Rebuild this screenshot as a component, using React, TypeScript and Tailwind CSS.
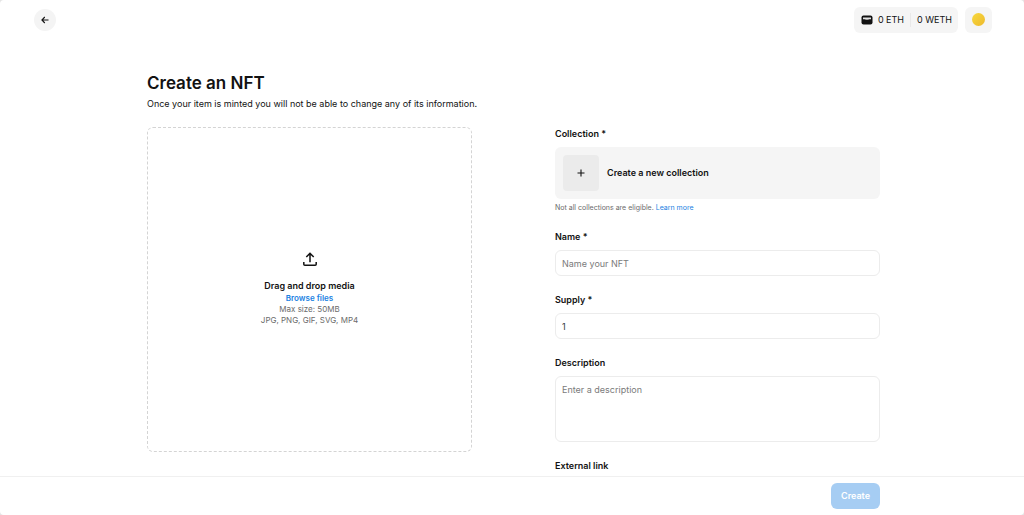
import React from "react";

interface FieldProps {
  id: string;
  label: string;
  children: React.ReactNode;
}

const inputStyles =
  "block w-full rounded-md border border-[#ececec] bg-white px-1.5 text-[9px] leading-[14px] text-[#353840] outline-none placeholder:text-[#7b7b7b] placeholder:opacity-100 focus:border-[#2081e2]";

const Field: React.FC<FieldProps> = ({ id, label, children }) => (
  <div className="flex flex-col gap-1.5">
    <label htmlFor={id} className="text-[9px] leading-[14px] font-semibold">
      {label}
    </label>
    {children}
  </div>
);

const ArrowLeftIcon = () => (
  <svg
    viewBox="0 0 10 10"
    className="size-[10px]"
    fill="none"
    stroke="currentColor"
    strokeWidth="1.1"
  >
    <path d="M8.500 5H2M4.800 2 1.900 5l2.900 3" />
  </svg>
);

const WalletIcon = () => (
  <svg viewBox="0 0 12 10" className="h-[10px] w-3">
    <rect x="0.5" y="0.5" width="11" height="9" rx="2" fill="#121212" />
    <path
      d="M2 2.200h8v2H8.300c-.6 0-.8.800-2.300.800s-1.700-.8-2.300-.8H2z"
      fill="#9a9a9a"
    />
    <path d="M2 3.600h8" stroke="#f5f5f5" strokeWidth="0.9" />
  </svg>
);

const UploadIcon = () => (
  <svg
    viewBox="0 0 14 14"
    className="size-[14px]"
    fill="none"
    stroke="currentColor"
    strokeWidth="1.5"
  >
    <path d="M7 10.200V1.300M3.300 5 7 1.300 10.700 5" />
    <path d="M.8 10v2.200c0 .6.400 1 1 1h10.400c.6 0 1-.4 1-1V10" />
  </svg>
);

const PlusIcon = () => (
  <svg
    viewBox="0 0 8 8"
    className="size-2"
    stroke="currentColor"
    strokeWidth="1.1"
  >
    <path d="M4 .5v7M.5 4h7" />
  </svg>
);

const Header = () => (
  <header className="flex h-[39px] shrink-0 items-center justify-between pr-8 pl-[34px]">
    <button
      type="button"
      aria-label="Back"
      className="flex size-[22px] items-center justify-center rounded-full bg-[#f4f4f4]"
    >
      <ArrowLeftIcon />
    </button>
    <div className="flex gap-[7px]">
      <button
        type="button"
        className="flex h-[26px] items-center rounded-md bg-[#f5f5f5] pr-1.5 pl-[7px] text-[9px]"
      >
        <WalletIcon />
        <span className="ml-[5px]">0 ETH</span>
        <span className="mx-1.5 h-[14px] w-px bg-[#e9e9e9]" />
        <span>0 WETH</span>
      </button>
      <button
        type="button"
        aria-label="Account"
        className="flex h-[26px] w-[27px] items-center justify-center rounded-md bg-[#f5f5f5]"
      >
        <span className="size-[13px] rounded-full bg-linear-to-br from-[#f7d93c] to-[#edb92e]" />
      </button>
    </div>
  </header>
);

const MediaUpload = () => (
  <button
    type="button"
    className="flex aspect-square w-full flex-col items-center justify-center rounded-md border border-dashed border-[#d4d4d4] pb-0.5"
  >
    <UploadIcon />
    <span className="mt-[13px] text-[9px] leading-[14px] font-semibold">
      Drag and drop media
    </span>
    <span className="text-[8px] leading-[11px] font-semibold text-[#2081e2]">
      Browse files
    </span>
    <span className="text-[8px] leading-[11px] text-[#6b6b6b]">
      Max size: 50MB
    </span>
    <span className="text-[8px] leading-[11px] text-[#6b6b6b]">
      JPG, PNG, GIF, SVG, MP4
    </span>
  </button>
);

const CreateForm = () => (
  <form id="create-nft" className="flex flex-col gap-[17px] pb-12">
    <div>
      <Field id="collection" label="Collection *">
        <button
          id="collection"
          type="button"
          className="flex w-full items-center gap-2 rounded-md bg-[#f5f5f5] p-2 text-[9px] font-semibold"
        >
          <span className="flex size-9 items-center justify-center rounded bg-[#ebebeb]">
            <PlusIcon />
          </span>
          Create a new collection
        </button>
      </Field>
      <p className="mt-1 text-[7px] leading-[10px] text-[#6b6b6b]">
        Not all collections are eligible.{" "}
        <a href="#learn-more" className="text-[#2081e2]">
          Learn more
        </a>
      </p>
    </div>
    <Field id="name" label="Name *">
      <input
        id="name"
        type="text"
        placeholder="Name your NFT"
        className={`${inputStyles} h-[26px]`}
      />
    </Field>
    <Field id="supply" label="Supply *">
      <input
        id="supply"
        type="text"
        inputMode="numeric"
        defaultValue="1"
        className={`${inputStyles} h-[26px]`}
      />
    </Field>
    <Field id="description" label="Description">
      <textarea
        id="description"
        placeholder="Enter a description"
        className={`${inputStyles} h-[66px] resize-none py-1.5`}
      />
    </Field>
    <Field id="external-link" label="External link">
      <input
        id="external-link"
        type="url"
        placeholder="https://collection.io/item/123"
        className={`${inputStyles} h-[26px]`}
      />
    </Field>
  </form>
);

export default function App() {
  return (
    <div className="h-screen bg-[#e4e4e4] font-['Inter',sans-serif] text-[#121212]">
      <div className="flex h-full flex-col overflow-hidden rounded bg-white">
        <Header />
        <main className="min-h-0 flex-1 overflow-hidden pt-8 pl-[3px]">
          <div className="mx-auto w-full max-w-[733px]">
            <h1 className="text-[17px] leading-6 font-semibold">
              Create an NFT
            </h1>
            <p className="mt-0.5 text-[9px] leading-[14px]">
              Once your item is minted you will not be able to change any of its
              information.
            </p>
            <div className="mt-4 grid grid-cols-2 items-start gap-[83px]">
              <MediaUpload />
              <CreateForm />
            </div>
          </div>
        </main>
        <footer className="shrink-0 border-t border-[#f0f0f0] py-1.5 pl-[3px]">
          <div className="mx-auto flex w-full max-w-[733px] justify-end">
            <button
              type="submit"
              form="create-nft"
              disabled
              className="h-[26px] rounded-md bg-[#a6cdf3] px-2.5 text-[9px] font-semibold text-white"
            >
              Create
            </button>
          </div>
        </footer>
      </div>
    </div>
  );
}
